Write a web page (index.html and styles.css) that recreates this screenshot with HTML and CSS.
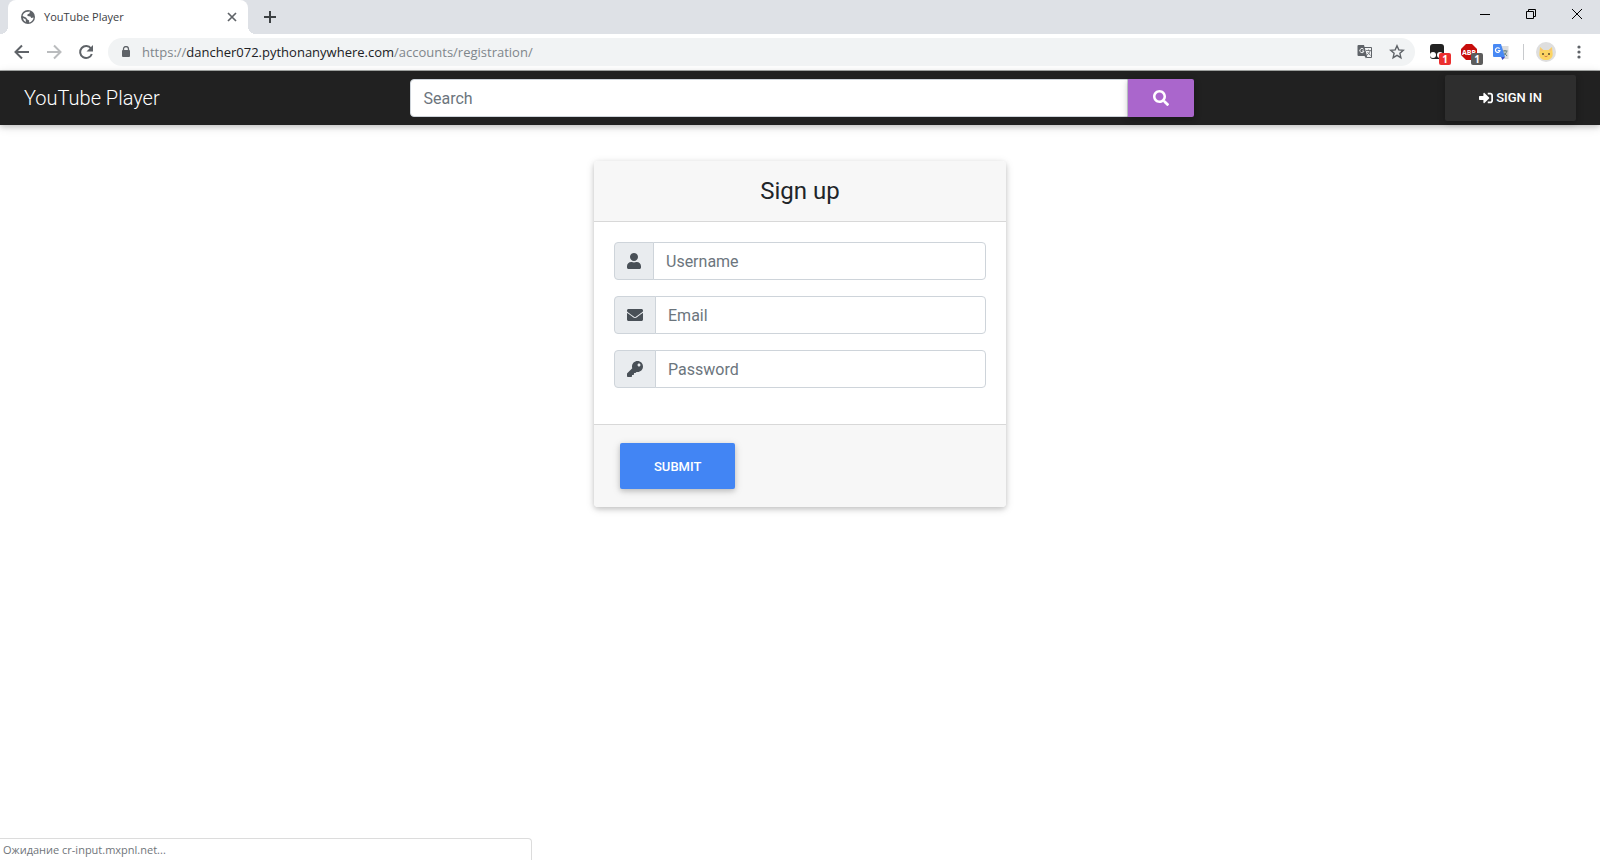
FILE: index.html
```html
<!DOCTYPE html>
<html lang="en">
<head>
  <meta charset="UTF-8">
  <title>YouTube Player</title>
  <meta name="viewport" content="width=device-width, initial-scale=1.0">
  <link rel="stylesheet" href="styles.css">
</head>
<body>

<div class="browser">
  <div class="tabs">
    <div class="tab">
      <svg class="globe" width="14" height="14" viewBox="0 0 14 14"><circle cx="7" cy="7" r="7" fill="#5f6368"/><path d="M5 2l4-.6-.6 2L6.600 4.200 6.400 6l3 .4.800 1.600 2.400-.6C12.400 10 10.500 12 8 12.500L8.200 10.600 6.400 9.400 5 7.600 1.600 6C1.900 4.200 3.200 2.700 5 2z" fill="#fff"/><path d="M2 8l2.600 1.200L5 12C3.300 11.300 2.200 9.800 2 8z" fill="#fff"/></svg>
      <span class="tab-title">YouTube Player</span>
      <button class="icon-btn" aria-label="Close tab"><svg width="10" height="10" viewBox="0 0 10 10"><path d="M1 1l8 8M9 1L1 9" stroke="#5f6368" stroke-width="1.700"/></svg></button>
    </div>
    <button class="icon-btn new-tab" aria-label="New tab"><svg width="12" height="12" viewBox="0 0 12 12"><path d="M6 0v12M0 6h12" stroke="#3c4043" stroke-width="2"/></svg></button>
    <div class="window-controls">
      <button aria-label="Minimize"><svg width="10" height="10" viewBox="0 0 10 10"><path d="M0 5.500h10" stroke="#000"/></svg></button>
      <button aria-label="Restore"><svg width="10" height="10" viewBox="0 0 10 10" fill="none" stroke="#000"><path d="M.5 2.500h7v7h-7zM2.500 2.500v-2h7v7h-2"/></svg></button>
      <button aria-label="Close"><svg width="10" height="10" viewBox="0 0 10 10"><path d="M0 0l10 10M10 0L0 10" stroke="#000"/></svg></button>
    </div>
  </div>

  <div class="toolbar">
    <button class="icon-btn" aria-label="Back"><svg width="16" height="16" viewBox="0 0 16 16" fill="none" stroke="#5f6368" stroke-width="2"><path d="M15 8H2.500M8 1.500L1.500 8 8 14.500"/></svg></button>
    <button class="icon-btn" aria-label="Forward"><svg width="16" height="16" viewBox="0 0 16 16" fill="none" stroke="#babcbe" stroke-width="2"><path d="M1 8h12.500M8 1.500L14.500 8 8 14.500"/></svg></button>
    <button class="icon-btn" aria-label="Reload"><svg width="16" height="16" viewBox="0 0 16 16"><path d="M13 4.500A6 6 0 1 0 13.800 10" fill="none" stroke="#5f6368" stroke-width="2"/><path d="M15 1v6.500H8.500z" fill="#5f6368"/></svg></button>
    <div class="address">
      <svg width="10" height="12" viewBox="0 0 10 12"><path d="M2.500 5V3a2.500 2.500 0 0 1 5 0v2" fill="none" stroke="#5f6368" stroke-width="1.300"/><rect x="1" y="4" width="8" height="7" rx="1" fill="#5f6368"/></svg>
      <div class="url">https://<span>dancher072.pythonanywhere.com</span>/accounts/registration/</div>
      <button class="icon-btn" aria-label="Translate this page"><svg width="16" height="16" viewBox="0 0 16 16"><path d="M6.500 3.500h8v10h-5z" fill="#f1f3f4" stroke="#5f6368"/><path d="M1.500 1h5.500l3 11H1.500A1 1 0 0 1 .5 11V2a1 1 0 0 1 1-1z" fill="#5f6368"/><path d="M6.600 5.300A2.100 2.100 0 1 0 7 7H5" fill="none" stroke="#f1f3f4"/><path d="M9 6.500h5M11.500 5.500v1M13 7c-.5 2-1.500 3-3 4M10.500 8l3 3.500" fill="none" stroke="#5f6368" stroke-width=".8"/><path d="M7.500 12H10l-1 2.500z" fill="#5f6368"/></svg></button>
      <button class="icon-btn" aria-label="Bookmark"><svg width="16" height="16" viewBox="0 0 16 16"><path d="M8 1.800l1.800 4.100 4.500.4-3.400 3 1 4.400L8 11.400l-3.900 2.300 1-4.400-3.400-3 4.500-.4z" fill="none" stroke="#5f6368" stroke-width="1.400"/></svg></button>
    </div>
    <div class="extensions">
      <button class="extension" aria-label="Tampermonkey"><svg width="16" height="16" viewBox="0 0 16 16"><rect x="1" width="14" height="15" rx="3" fill="#222"/><circle cx="4" cy="11" r="3" fill="#fff"/><circle cx="11" cy="11" r="3" fill="#fff"/></svg><span class="badge red">1</span></button>
      <button class="extension" aria-label="Adblock Plus"><svg width="16" height="16" viewBox="0 0 16 16"><path d="M5 0h6l5 5v6l-5 5H5l-5-5V5z" fill="#c70d0c"/><text x="8" y="11" text-anchor="middle" class="abp">ABP</text></svg><span class="badge grey">1</span></button>
      <button class="extension" aria-label="Google Translate"><svg width="16" height="16" viewBox="0 0 16 16"><path d="M6 2h9.500v13H10z" fill="#dcdcdc"/><path d="M9.500 7h5M12 6v1M13.500 7.500c-.5 2-1.500 3-3 4M11 8.500l3 3.500" fill="none" stroke="#607d7b"/><path d="M1 0h7l4 13H1a1 1 0 0 1-1-1V1a1 1 0 0 1 1-1z" fill="#4889f4"/><path d="M8 13h4l-2.500 3z" fill="#3a50c8"/><path d="M6.600 4.700A2.300 2.300 0 1 0 7 6.500H4.800" fill="none" stroke="#fff" stroke-width="1.200"/></svg></button>
    </div>
    <span class="divider"></span>
    <button class="icon-btn avatar" aria-label="Profile"><svg width="20" height="20" viewBox="0 0 20 20"><circle cx="10" cy="10" r="10" fill="#dedede"/><path d="M4 5l3.500 3h5L16 5l.7 7c0 4-3 6-6.700 6s-6.700-2-6.700-6z" fill="#fcd462"/><path d="M4.800 7.500l1.500 1M15.200 7.500l-1.500 1" stroke="#f5a6a0"/><circle cx="7" cy="12" r="1" fill="#5b4a2e"/><circle cx="13" cy="12" r="1" fill="#5b4a2e"/><path d="M8.500 14l1.500.7 1.500-.7" fill="none" stroke="#d87c4a"/></svg></button>
    <button class="icon-btn" aria-label="Menu"><svg width="16" height="16" viewBox="0 0 16 16" fill="#5f6368"><circle cx="8" cy="3" r="1.600"/><circle cx="8" cy="8" r="1.600"/><circle cx="8" cy="13" r="1.600"/></svg></button>
  </div>
</div>

<nav class="navbar">
  <a class="brand" href="#">YouTube Player</a>
  <form class="search">
    <input type="text" placeholder="Search" aria-label="Search">
    <button type="button" aria-label="Search"><svg width="16" height="16" viewBox="0 0 512 512" fill="#fff"><path d="M505 442.700L405.300 343c-4.500-4.500-10.600-7-17-7H372c27.600-35.300 44-79.700 44-128C416 93.100 322.900 0 208 0S0 93.100 0 208s93.100 208 208 208c48.300 0 92.700-16.400 128-44v16.300c0 6.400 2.500 12.500 7 17l99.700 99.700c9.400 9.400 24.600 9.400 33.900 0l28.300-28.300c9.400-9.400 9.400-24.600.1-34zM208 336c-70.700 0-128-57.200-128-128 0-70.700 57.200-128 128-128 70.700 0 128 57.200 128 128 0 70.700-57.200 128-128 128z"/></svg></button>
  </form>
  <a class="sign-in" href="#"><svg width="14" height="14" viewBox="0 0 512 512" fill="#fff"><path d="M416 448h-84c-6.600 0-12-5.400-12-12v-40c0-6.600 5.400-12 12-12h84c17.700 0 32-14.300 32-32V160c0-17.700-14.300-32-32-32h-84c-6.600 0-12-5.400-12-12V76c0-6.600 5.400-12 12-12h84c53 0 96 43 96 96v192c0 53-43 96-96 96zm-47-209L201 71c-15-15-41-4.500-41 17v96H24c-13.300 0-24 10.700-24 24v96c0 13.300 10.700 24 24 24h136v96c0 21.500 26 32 41 17l168-168c9.300-9.400 9.300-24.600 0-34z"/></svg>SIGN IN</a>
</nav>

<main>
  <form class="card">
    <div class="card-header"><h4>Sign up</h4></div>
    <div class="card-body">
      <div class="input-group">
        <label for="username" aria-label="Username"><svg width="14" height="16" viewBox="0 0 448 512" fill="#495057"><path d="M224 256c70.700 0 128-57.300 128-128S294.700 0 224 0 96 57.300 96 128s57.300 128 128 128zm89.600 32h-16.700c-22.200 10.200-46.900 16-72.900 16s-50.600-5.800-72.900-16h-16.700C60.200 288 0 348.200 0 422.400V464c0 26.500 21.500 48 48 48h352c26.500 0 48-21.500 48-48v-41.600c0-74.200-60.200-134.400-134.400-134.400z"/></svg></label>
        <input id="username" type="text" placeholder="Username">
      </div>
      <div class="input-group">
        <label for="email" aria-label="Email"><svg width="16" height="16" viewBox="0 0 512 512" fill="#495057"><path d="M502.300 190.800c3.900-3.100 9.700-.2 9.700 4.700V400c0 26.500-21.500 48-48 48H48c-26.500 0-48-21.500-48-48V195.600c0-5 5.700-7.800 9.700-4.700 22.400 17.400 52.100 39.500 154.100 113.600 21.100 15.400 56.700 47.800 92.200 47.600 35.700.3 72-32.800 92.300-47.600 102-74.100 131.600-96.300 154-113.700zM256 320c23.200.4 56.600-29.200 73.400-41.400 132.700-96.300 142.800-104.700 173.400-128.700 5.800-4.500 9.200-11.500 9.200-18.900v-19c0-26.500-21.500-48-48-48H48c-26.500 0-48 21.500-48 48v19c0 7.400 3.400 14.300 9.200 18.900 30.600 23.900 40.700 32.400 173.400 128.700 16.800 12.200 50.200 41.800 73.400 41.400z"/></svg></label>
        <input id="email" type="email" placeholder="Email">
      </div>
      <div class="input-group">
        <label for="password" aria-label="Password"><svg width="16" height="16" viewBox="0 0 512 512" fill="#495057"><path d="M512 176c0 97.200-78.800 176-176 176-11.200 0-22.200-1.100-32.800-3.100l-24 27A24 24 0 0 1 261.200 384H224v40c0 13.300-10.700 24-24 24h-40v40c0 13.300-10.700 24-24 24H24c-13.300 0-24-10.700-24-24v-78.100c0-6.400 2.500-12.500 7-17l161.800-161.800C162.900 213.800 160 195.300 160 176 160 78.800 238.800 0 336 0c97.500 0 176 78.500 176 176zM336 128c0 26.500 21.500 48 48 48s48-21.500 48-48-21.500-48-48-48-48 21.500-48 48z"/></svg></label>
        <input id="password" type="password" placeholder="Password">
      </div>
    </div>
    <div class="card-footer">
      <button class="submit" type="button">SUBMIT</button>
    </div>
  </form>
</main>

<div class="status">Ожидание cr-input.mxpnl.net...</div>

</body>
</html>
```
FILE: styles.css
```css
* { box-sizing: border-box; }
body { margin: 0; min-height: 100vh; background: #fff; color: #212529; font-family: Roboto, sans-serif; font-size: 16px; line-height: 24px; }
button, input { font-family: inherit; }
button { cursor: pointer; border: 0; padding: 0; background: none; }
svg { display: block; flex: none; }
a { text-decoration: none; }

/* browser window */
.browser { font-family: "Open Sans", sans-serif; border-bottom: 1px solid #a9acaa; }
.tabs { display: flex; align-items: center; height: 34px; padding-left: 8px; background: #dee1e6; }
.tab { position: relative; display: flex; align-items: center; gap: 9px; width: 240px; height: 34px; padding: 0 8px 0 13px; background: #fff; border-radius: 8px 8px 0 0; }
.tab::before, .tab::after { content: ""; position: absolute; bottom: 0; width: 8px; height: 8px; }
.tab::before { left: -8px; background: radial-gradient(circle at 0 0, transparent 8px, #fff 8px); }
.tab::after { right: -8px; background: radial-gradient(circle at 100% 0, transparent 8px, #fff 8px); }
.tab-title { flex: 1; font-size: 11px; color: #3c4043; }
.icon-btn { display: flex; align-items: center; justify-content: center; width: 16px; height: 16px; }
.new-tab { margin-left: 14px; }
.window-controls { display: flex; align-self: flex-start; margin-left: auto; }
.window-controls button { display: flex; align-items: center; justify-content: center; width: 46px; height: 28px; }

.toolbar { display: flex; align-items: center; gap: 16px; height: 36px; padding: 0 13px 0 14px; }
.address { flex: 1; display: flex; align-items: center; gap: 16px; height: 28px; margin-left: -2px; padding: 0 10px 0 13px; background: #f1f3f4; border-radius: 14px; }
.url { flex: 1; margin-left: -5px; font-size: 13px; color: #80868b; }
.url span { color: #202124; }
.extensions { display: flex; gap: 16px; margin: 0 -2px; }
.extension { position: relative; width: 16px; height: 16px; }
.abp { font: bold 7px "Open Sans", sans-serif; fill: #fff; }
.badge { position: absolute; left: 10px; top: 9px; width: 12px; height: 12px; border-radius: 2px; color: #fff; font-size: 10px; font-weight: bold; line-height: 12px; text-align: center; }
.red { background: #eb2f2f; }
.grey { background: #5c5c5c; }
.divider { width: 1px; height: 16px; background: #c8cacd; }
.avatar { width: 20px; height: 20px; margin: 0 -1px 0 -4px; }

/* site navbar */
.navbar { display: flex; align-items: center; justify-content: space-between; padding: 4px 24px; background: #212121; box-shadow: 0 2px 5px rgba(0,0,0,0.16), 0 2px 10px rgba(0,0,0,0.12); }
.brand { color: #fff; font-size: 20px; font-weight: 300; }
.search { display: flex; width: 49vw; }
.search input { flex: 1; min-width: 0; height: 38px; padding: 0 12px; border: 1px solid #ced4da; border-radius: 4px 0 0 4px; font-size: 16px; }
.search button { display: flex; align-items: center; justify-content: center; width: 66px; border-radius: 0 2px 2px 0; background: #a6c; box-shadow: 0 2px 5px rgba(0,0,0,0.16), 0 2px 10px rgba(0,0,0,0.12); }
.sign-in { display: flex; align-items: center; gap: 3px; height: 46px; padding: 0 34px; border-radius: 2px; background: #2e2e2e; color: #fff; font-size: 13px; font-weight: 500; box-shadow: 0 2px 5px rgba(0,0,0,0.16), 0 2px 10px rgba(0,0,0,0.12); }

/* sign up card */
.card { width: 412px; max-width: 100%; margin: 36px auto; border-radius: 4px; background: #fff; box-shadow: 0 2px 5px rgba(0,0,0,0.16), 0 2px 10px rgba(0,0,0,0.12); }
.card-header { padding: 12px 20px; border-bottom: 1px solid #d8d8d8; border-radius: 4px 4px 0 0; background: #f7f7f7; text-align: center; }
.card-header h4 { margin: 0; font-size: 24px; font-weight: 400; line-height: 36px; }
.card-body { padding: 20px; }
.input-group { display: flex; height: 38px; margin-bottom: 16px; }
.input-group label { display: flex; align-items: center; padding: 0 12px; border: 1px solid #ced4da; border-radius: 4px 0 0 4px; background: #e9ecef; }
.input-group input { flex: 1; min-width: 0; margin-left: -1px; padding: 0 12px; border: 1px solid #ced4da; border-radius: 0 4px 4px 0; font-size: 16px; }
input::placeholder { color: #6c757d; opacity: 1; }
.card-footer { padding: 18px 26px; border-top: 1px solid #d8d8d8; border-radius: 0 0 4px 4px; background: #f7f7f7; }
.submit { display: block; height: 46px; padding: 0 34px; border-radius: 2px; background: #4285f4; color: #fff; font-size: 13px; font-weight: 500; box-shadow: 0 2px 5px rgba(0,0,0,0.16), 0 2px 10px rgba(0,0,0,0.12); }

/* loading status in the window corner */
.status { position: fixed; left: 0; bottom: 0; width: 532px; max-width: 100%; height: 22px; padding-left: 3px; border: 1px solid #dcdcdc; border-width: 1px 1px 0 0; border-radius: 0 4px 0 0; background: #fff; color: #70757a; font-family: "Open Sans", sans-serif; font-size: 11px; line-height: 21px; }
```
